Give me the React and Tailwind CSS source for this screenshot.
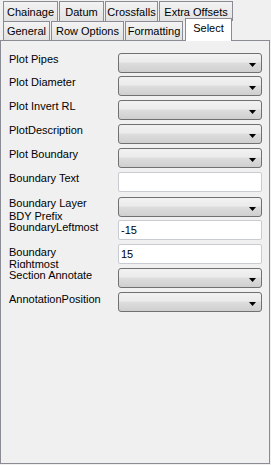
import React from "react";

const rowsTop = [
  { label: "Chainage", w: "w-[55px]" },
  { label: "Datum", w: "w-[45px]" },
  { label: "Crossfalls", w: "w-[53px]" },
  { label: "Extra Offsets", w: "w-[74px]" },
];

const rowsBottom = [
  { label: "General", w: "w-[47px]" },
  { label: "Row Options", w: "w-[73px]" },
  { label: "Formatting", w: "w-[58px]" },
];

const fields = [
  { label: ["Plot Pipes"], type: "combo", h: "h-[23px]", pad: "pt-0" },
  { label: ["Plot Diameter"], type: "combo", h: "h-[24px]", pad: "pt-0" },
  { label: ["Plot Invert RL"], type: "combo", h: "h-[24px]", pad: "pt-0" },
  { label: ["PlotDescription"], type: "combo", h: "h-[24px]", pad: "pt-0" },
  { label: ["Plot Boundary"], type: "combo", h: "h-[24px]", pad: "pt-0" },
  { label: ["Boundary Text"], type: "text", value: "", h: "h-[25px]", pad: "pt-0" },
  { label: ["Boundary Layer", "BDY Prefix"], type: "combo", h: "h-[23px]", pad: "pt-0 relative z-10" },
  { label: ["BoundaryLeftmost"], type: "text", value: "-15", h: "h-[24px]", pad: "pt-[1px]" },
  { label: ["Boundary", "Rightmost"], type: "text", value: "15", h: "h-[24px]", pad: "pt-[2px] leading-[12px] overflow-hidden" },
  { label: ["Section Annotate"], type: "combo", h: "h-[24px]", pad: "pt-[1px]" },
  { label: ["AnnotationPosition"], type: "combo", h: "h-[24px]", pad: "pt-[1px]" },
];

const Combo = () => (
  <div className="relative w-[144px] h-[20px] rounded-[3px] border border-[#707070] bg-[linear-gradient(to_bottom,#f2f2f2_0%,#ebebeb_45%,#dddddd_50%,#cfcfcf_100%)]">
    <svg
      className="absolute right-[5px] top-[9px]"
      width="7"
      height="4"
      viewBox="0 0 7 4"
    >
      <path d="M0 0H7L3.5 4Z" fill="#000" />
    </svg>
  </div>
);

const TextBox = ({ value }) => (
  <div className="w-[144px] h-[20px] rounded-[2px] border border-[#c8ccd2] bg-white pl-[2px] leading-[18px]">
    {value}
  </div>
);

const Tab = ({ label, w }) => (
  <div
    className={`${w} h-full mr-[1px] border border-b-0 border-[#898c95] bg-[linear-gradient(to_bottom,#f3f3f3,#e2e2e2)] flex items-center justify-center pt-[1px]`}
  >
    {label}
  </div>
);

export default function App() {
  return (
    <div className="w-[271px] h-[465px] bg-[#f0f0f0] text-black text-[11px] leading-[13px] font-['Liberation_Sans',Arial,sans-serif]">
      {/* Tab header, two rows */}
      <div className="pt-[1px] pl-[3px]">
        <div className="flex h-[20px]">
          {rowsTop.map((t) => (
            <Tab key={t.label} {...t} />
          ))}
        </div>
        <div className="flex items-end h-[19px] relative z-10">
          {rowsBottom.map((t) => (
            <Tab key={t.label} {...t} />
          ))}
          <div className="w-[47px] h-[23px] -mb-[1px] ml-[1px] border border-b-0 border-[#898c95] bg-white flex justify-center pt-[3px]">
            Select
          </div>
        </div>
      </div>

      {/* Panel */}
      <div className="w-[270px] h-[424px] border border-[#898c95] bg-[#f0f0f0] pl-[8px] pt-[12px]">
        <div className="flex flex-col">
          {fields.map((f, i) => (
            <div key={i} className={`flex ${f.h}`}>
              <div className={`w-[109px] h-full ${f.pad}`}>
                {f.label.map((l) => (
                  <div key={l}>{l}</div>
                ))}
              </div>
              {f.type === "combo" ? <Combo /> : <TextBox value={f.value} />}
            </div>
          ))}
        </div>
      </div>
    </div>
  );
}
